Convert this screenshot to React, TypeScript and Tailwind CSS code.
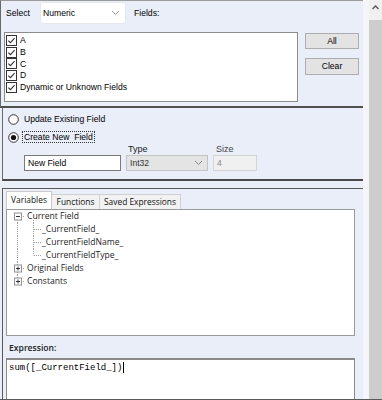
import React from "react";

const sans = "font-['Liberation_Sans',Arial,sans-serif]";
const ui = "font-['Open_Sans','Noto_Sans',sans-serif]";

function Check() {
  return (
    <svg width="11" height="11" viewBox="0 0 11 11" className="shrink-0">
      <rect x="0.5" y="0.5" width="10" height="10" fill="#fff" stroke="#333" />
      <path d="M2.3 5.6 L4.4 7.6 L8.6 3.2" fill="none" stroke="#333" strokeWidth="1.1" />
    </svg>
  );
}

function Radio({ on }: { on?: boolean }) {
  return (
    <svg width="11" height="11" viewBox="0 0 11 11" className="shrink-0">
      <circle cx="5.5" cy="5.5" r="4.8" fill="#fff" stroke="#333" />
      {on && <circle cx="5.5" cy="5.5" r="2.6" fill="#111" />}
    </svg>
  );
}

function Chevron({ color = "#888" }: { color?: string }) {
  return (
    <svg width="9" height="6" viewBox="0 0 9 6">
      <path d="M1 1 L4.5 4.5 L8 1" fill="none" stroke={color} strokeWidth="1" />
    </svg>
  );
}

type Kind = "open" | "child" | "lastChild" | "closed" | "lastClosed";

// connector drawing for one tree row
function Lines({ kind }: { kind: Kind }) {
  const dot = { stroke: "#a0a0a0", strokeWidth: 1, strokeDasharray: "1 1" };
  return (
    <svg width="42" height="13" viewBox="0 0 42 13" className="shrink-0">
      {(kind === "open" || kind === "closed" || kind === "lastClosed") && (
        <>
          {kind !== "lastClosed" && <line x1="10.5" y1="10" x2="10.5" y2="13" {...dot} />}
          {kind !== "open" && <line x1="10.5" y1="0" x2="10.5" y2="3" {...dot} />}
          <line x1="14" y1="6.5" x2="18" y2="6.5" {...dot} />
          <rect x="7.5" y="3" width="7" height="7" fill="#fff" stroke="#919191" />
          <line x1="9" y1="6.5" x2="13" y2="6.5" stroke="#333" />
          {kind !== "open" && <line x1="11" y1="4.5" x2="11" y2="8.5" stroke="#333" />}
          {kind === "open" && <line x1="26.5" y1="10" x2="26.5" y2="13" {...dot} />}
        </>
      )}
      {(kind === "child" || kind === "lastChild") && (
        <>
          <line x1="10.5" y1="0" x2="10.5" y2="13" {...dot} />
          <line x1="26.5" y1="0" x2="26.5" y2={kind === "child" ? 13 : 6.5} {...dot} />
          <line x1="27" y1="6.5" x2="35" y2="6.5" {...dot} />
        </>
      )}
    </svg>
  );
}

function TreeRow({ kind, label }: { kind: Kind; label: string }) {
  const child = kind === "child" || kind === "lastChild";
  return (
    <div className="flex h-[13px] items-center">
      <Lines kind={kind} />
      <span className={`${ui} text-[8.6px] leading-none text-[#1e1e1e] ${child ? "ml-[-7px]" : "ml-[-22px]"}`}>{label}</span>
    </div>
  );
}

export default function App() {
  const fields = ["A", "B", "C", "D", "Dynamic or Unknown Fields"];
  return (
    <div className="w-[382px] h-[400px] overflow-hidden flex bg-[#e9eef8] border-b border-[#5a5a5a]">
      <div className="w-[363px] flex flex-col">
        {/* fields section */}
        <div className="h-[108px] border-t border-l border-t-[#9a9a9a] border-l-[#6a6a6a] border-b-2 border-b-[#505050]">
          <div className={`${sans} text-[8.6px] text-black flex items-center h-[22px] mt-[1px] pl-[5px]`}>
            <span className="w-[34px]">Select</span>
            <div className="w-[86px] h-[22px] bg-white rounded-[3px] border border-[#e4e7ee] flex items-center justify-between pl-[2px] pr-[5px]">
              <span>Numeric</span>
              <Chevron color="#9a9a9a" />
            </div>
            <span className="ml-[8px]">Fields:</span>
          </div>
          <div className="flex mt-[8px] ml-[3px]">
            <div className="w-[294px] h-[70px] bg-white border border-[#8c8c8c] pt-[2px] pl-[1px]">
              {fields.map((f) => (
                <div key={f} className={`${sans} text-[8.6px] text-black flex items-center gap-[3px] h-[11.6px]`}>
                  <Check />
                  <span>{f}</span>
                </div>
              ))}
            </div>
            <div className="ml-[7px] mt-[1px] flex flex-col gap-[9px]">
              <button className={`${sans} text-[8.6px] text-black w-[54px] h-[16px] bg-[#e3e3e3] border border-[#adadad]`}>All</button>
              <button className={`${sans} text-[8.6px] text-black w-[54px] h-[17px] bg-[#e3e3e3] border border-[#adadad]`}>Clear</button>
            </div>
          </div>
        </div>

        {/* new field section */}
        <div className="h-[73px] ml-[2px] border-l border-[#6a6a6a] border-b-2 border-b-[#4a4a4a] overflow-hidden">
          <div className={`${sans} text-[8.6px] text-black pl-[5px] pt-[5px] flex flex-col gap-[6px]`}>
            <div className="flex items-center h-[12px] gap-[5px]">
              <Radio />
              <span>Update Existing Field</span>
            </div>
            <div className="flex items-center h-[12px] gap-[3px]">
              <Radio on />
              <span className="border border-dotted border-[#333] px-[1px] h-[12px] leading-[10px]">Create New&nbsp; Field</span>
            </div>
          </div>
          <div className={`${sans} text-[8.6px] flex items-start pl-[21px] gap-[5px] mt-[1px]`}>
            <div className="flex flex-col">
              <div className="h-[11px]" />
              <div className="w-[97px] h-[16px] bg-white border border-[#7a7a7a] flex items-center pl-[3px] text-black">New Field</div>
            </div>
            <div className="flex flex-col">
              <div className="h-[11px] text-[9px] leading-[11px] pl-[2px] text-[#222]">Type</div>
              <div className="w-[82px] h-[16px] bg-[#e4e4e4] border border-[#c4c4c4] flex items-center justify-between pl-[3px] pr-[4px] text-[#333]">
                <span>Int32</span>
                <Chevron />
              </div>
            </div>
            <div className="flex flex-col">
              <div className="h-[11px] text-[9px] leading-[11px] pl-[3px] text-[#444]">Size</div>
              <div className="w-[44px] h-[16px] bg-[#f0f0f0] border border-[#d4d4d4] flex items-center pl-[3px] text-[#8a8a8a]">4</div>
            </div>
          </div>
        </div>

        {/* expression section */}
        <div className="mt-[7px] flex-1 ml-[2px] border-l border-t border-[#5a5a5a] flex flex-col">
          <div className={`${ui} flex items-end ml-[3px] mt-[2px] h-[18px]`}>
            <div className="w-[46px] h-[18px] bg-white border border-[#c9c9c9] border-b-0 flex items-center justify-center text-[8.4px] text-[#111]">Variables</div>
            <div className="w-[48px] h-[15px] bg-[#f2f2f2] border border-[#d0d0d0] border-b-0 border-l-0 flex items-center justify-center text-[8.4px] text-[#111]">Functions</div>
            <div className="w-[81px] h-[15px] bg-[#f2f2f2] border border-[#d0d0d0] border-b-0 border-l-0 flex items-center justify-center text-[8.4px] text-[#111]">Saved Expressions</div>
          </div>
          <div className="ml-[3px] w-[349px] h-[127px] bg-white border border-[#9a9a9a]">
            <TreeRow kind="open" label="Current Field" />
            <TreeRow kind="child" label="_CurrentField_" />
            <TreeRow kind="child" label="_CurrentFieldName_" />
            <TreeRow kind="lastChild" label="_CurrentFieldType_" />
            <TreeRow kind="closed" label="Original Fields" />
            <TreeRow kind="lastClosed" label="Constants" />
          </div>
          <div className={`${ui} text-[8.6px] font-semibold text-[#222] ml-[6px] mt-[6px] h-[12px] leading-[12px]`}>Expression:</div>
          <div className="ml-[3px] mt-[4px] w-[349px] flex-1 bg-white border border-[#8a8a8a] border-t-2 border-b-0 pl-[2px] pt-[1px] text-[9px] leading-[12px]">
            <span className="font-['Liberation_Mono',monospace] text-black">sum([_CurrentField_])</span>
            <span className="inline-block w-[1px] h-[11px] bg-black align-middle ml-[1px]" />
          </div>
        </div>
      </div>
      <div className="w-[6px] bg-[#f4f6fb]" />
      <div className="w-[13px] bg-[#cdcdcd] flex flex-col">
        <div className="h-[20px] bg-[#f0f0f0] flex items-start justify-center pt-[5px]">
          <svg width="7" height="5" viewBox="0 0 7 5">
            <path d="M0.5 4 L3.5 1 L6.5 4" fill="none" stroke="#555" strokeWidth="1.3" />
          </svg>
        </div>
      </div>
    </div>
  );
}
